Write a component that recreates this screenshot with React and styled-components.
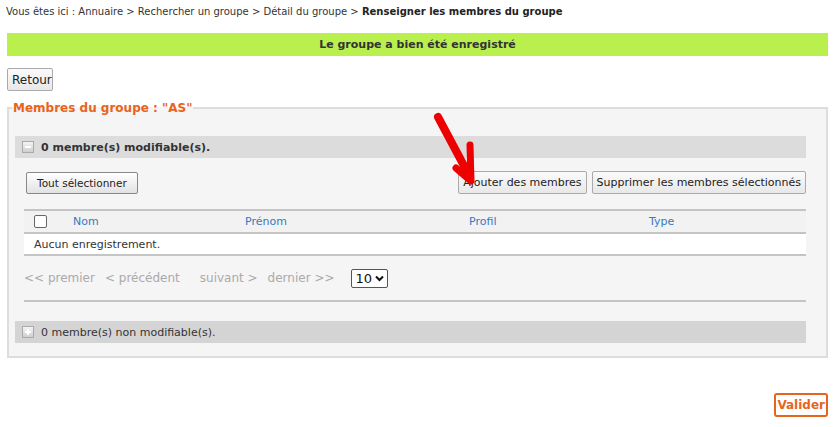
import React from 'react';
import styled, { createGlobalStyle } from 'styled-components';

const GlobalStyle = createGlobalStyle`
  body {
    margin: 0;
    background: #fff;
    font-family: "DejaVu Sans", Verdana, sans-serif;
    font-size: 11px;
    color: #333;
  }
`;

const Page = styled.div`
  position: relative;
  width: 821px;
  padding: 5px 0 0 7px;
`;

const Breadcrumb = styled.div`
  margin-left: -1px;
  height: 14px;
  line-height: 14px;
  font-size: 10px;
  color: #333;
  b {
    color: #222;
  }
`;

const SuccessBar = styled.div`
  margin-top: 14px;
  height: 23px;
  line-height: 23px;
  background: #b9f04e;
  text-align: center;
  font-weight: bold;
  font-size: 11px;
  color: #333;
`;

const Button = styled.button`
  font-family: "DejaVu Sans", Verdana, sans-serif;
  font-size: 11px;
  color: #222;
  height: 23px;
  padding: 0 4px;
  border: 1px solid #aaa;
  border-radius: 2px;
  background: linear-gradient(#fafafa, #e8e8e8);
  cursor: pointer;
`;

const BackButton = styled(Button)`
  margin-top: 12px;
  display: block;
  width: 46px;
  font-size: 12px;
`;

const Fieldset = styled.fieldset`
  margin: 10px 0 0;
  padding: 0 20px 13px 6px;
  border: 2px solid #ddd;
  background: #f5f5f5;
`;

const Legend = styled.legend`
  margin-left: -3px;
  padding: 0 1px;
  font-size: 12px;
  font-weight: bold;
  color: #e8641b;
`;

const GroupBar = styled.div`
  display: flex;
  align-items: center;
  gap: 7px;
  height: 22px;
  margin-top: ${(p) => p.$top}px;
  padding-left: 7px;
  background: ${(p) => (p.$bold ? '#dcdcdc' : '#d4d4d4')};
  font-size: 11px;
  font-weight: ${(p) => (p.$bold ? 'bold' : 'normal')};
  color: #333;
`;

const ToggleIcon = styled.span`
  width: 10px;
  height: 10px;
  border: 1px solid #aaa;
  background: linear-gradient(#f4f4f4, #cfcfcf);
  position: relative;
  &::after {
    content: '';
    position: absolute;
    left: 2px;
    top: 4px;
    width: 6px;
    height: 2px;
    background: #fff;
  }
  &::before {
    content: '';
    display: ${(p) => (p.$plus ? 'block' : 'none')};
    position: absolute;
    left: 4px;
    top: 2px;
    width: 2px;
    height: 6px;
    background: #fff;
  }
`;

const Members = styled.div`
  padding: 0 0 0 9px;
`;

const ActionRow = styled.div`
  display: flex;
  align-items: center;
  gap: 5px;
  margin-top: 13px;
`;

const SelectAllButton = styled(Button)`
  margin-left: 2px;
  margin-right: auto;
  height: 22px;
  padding: 0 10px;
  font-size: 10.5px;
  border-color: #888;
  background: linear-gradient(#ffffff, #e2e2e2);
`;

const Table = styled.table`
  width: 100%;
  margin-top: 15px;
  border-collapse: collapse;
  font-size: 11px;
  th {
    height: 21px;
    background: #f2f2f2;
    border-top: 2px solid #c4c4c4;
    border-bottom: 2px solid #c4c4c4;
    color: #3a78c0;
    font-weight: normal;
    text-align: left;
    padding: 0;
  }
  td {
    height: 20px;
    background: #fff;
    border-bottom: 2px solid #c4c4c4;
    padding: 0 0 0 10px;
    color: #333;
  }
`;

const Check = styled.span`
  display: inline-block;
  width: 11px;
  height: 11px;
  margin: 3px 0 0 10px;
  border: 1px solid #666;
  border-radius: 2px;
  background: #fff;
`;

const Pager = styled.div`
  display: flex;
  align-items: center;
  margin-top: 12px;
  height: 20px;
  font-size: 12px;
  color: #aaa;
`;

const PagerLink = styled.span`
  margin-right: ${(p) => p.$gap}px;
`;

const PageSize = styled.span`
  display: inline-flex;
  align-items: center;
  gap: 3px;
  height: 17px;
  padding: 0 3px 0 4px;
  border: 1px solid #555;
  border-radius: 2px;
  background: #fff;
  color: #111;
  font-size: 13px;
`;

const Divider = styled.div`
  margin-top: 12px;
  border-top: 2px solid #c4c4c4;
`;

const Footer = styled.div`
  display: flex;
  justify-content: flex-end;
  margin-top: 35px;
`;

const SubmitButton = styled.button`
  font-family: "DejaVu Sans", Verdana, sans-serif;
  height: 24px;
  padding: 0 1px;
  border: 2px solid #e8641b;
  border-radius: 3px;
  background: #fff;
  color: #e8641b;
  font-size: 12px;
  font-weight: bold;
`;

const Arrow = styled.svg`
  position: absolute;
  left: 425px;
  top: 105px;
  pointer-events: none;
`;

const cols = [
  { label: 'Nom', w: 172 },
  { label: 'Prénom', w: 224 },
  { label: 'Profil', w: 180 },
  { label: 'Type', w: 'auto' },
];

const App = () => (
  <>
    <GlobalStyle />
    <Page>
      <Breadcrumb>
        Vous êtes ici : Annuaire &gt; Rechercher un groupe &gt; Détail du groupe &gt;{' '}
        <b>Renseigner les membres du groupe</b>
      </Breadcrumb>
      <SuccessBar>Le groupe a bien été enregistré</SuccessBar>
      <BackButton>Retour</BackButton>
      <Fieldset>
        <Legend>Membres du groupe : "AS"</Legend>
        <GroupBar $bold $top={21}>
          <ToggleIcon />
          0 membre(s) modifiable(s).
        </GroupBar>
        <Members>
          <ActionRow>
            <SelectAllButton>Tout sélectionner</SelectAllButton>
            <Button>Ajouter des membres</Button>
            <Button>Supprimer les membres sélectionnés</Button>
          </ActionRow>
          <Table>
            <thead>
              <tr>
                <th style={{ width: 49 }}>
                  <Check />
                </th>
                {cols.map((c) => (
                  <th key={c.label} style={{ width: c.w }}>
                    {c.label}
                  </th>
                ))}
              </tr>
            </thead>
            <tbody>
              <tr>
                <td colSpan={5}>Aucun enregistrement.</td>
              </tr>
            </tbody>
          </Table>
          <Pager>
            <PagerLink $gap={10}>&lt;&lt; premier</PagerLink>
            <PagerLink $gap={20}>&lt; précédent</PagerLink>
            <PagerLink $gap={10}>suivant &gt;</PagerLink>
            <PagerLink $gap={16}>dernier &gt;&gt;</PagerLink>
            <PageSize>
              10
              <svg width="9" height="7" viewBox="0 0 9 7">
                <path d="M1 1.5 L4.5 5 L8 1.5" fill="none" stroke="#111" strokeWidth="2" />
              </svg>
            </PageSize>
          </Pager>
          <Divider />
        </Members>
        <GroupBar $top={19}>
          <ToggleIcon $plus />
          0 membre(s) non modifiable(s).
        </GroupBar>
      </Fieldset>
      <Footer>
        <SubmitButton>Valider</SubmitButton>
      </Footer>
      <Arrow width="60" height="90" viewBox="0 0 60 90">
        <path d="M13 12 L45 72" stroke="#e00" strokeWidth="8" strokeLinecap="round" fill="none" />
        <path d="M31 63 L46 76 L45 40" stroke="#e00" strokeWidth="7" strokeLinecap="round" strokeLinejoin="round" fill="none" />
      </Arrow>
    </Page>
  </>
);

export default App;
